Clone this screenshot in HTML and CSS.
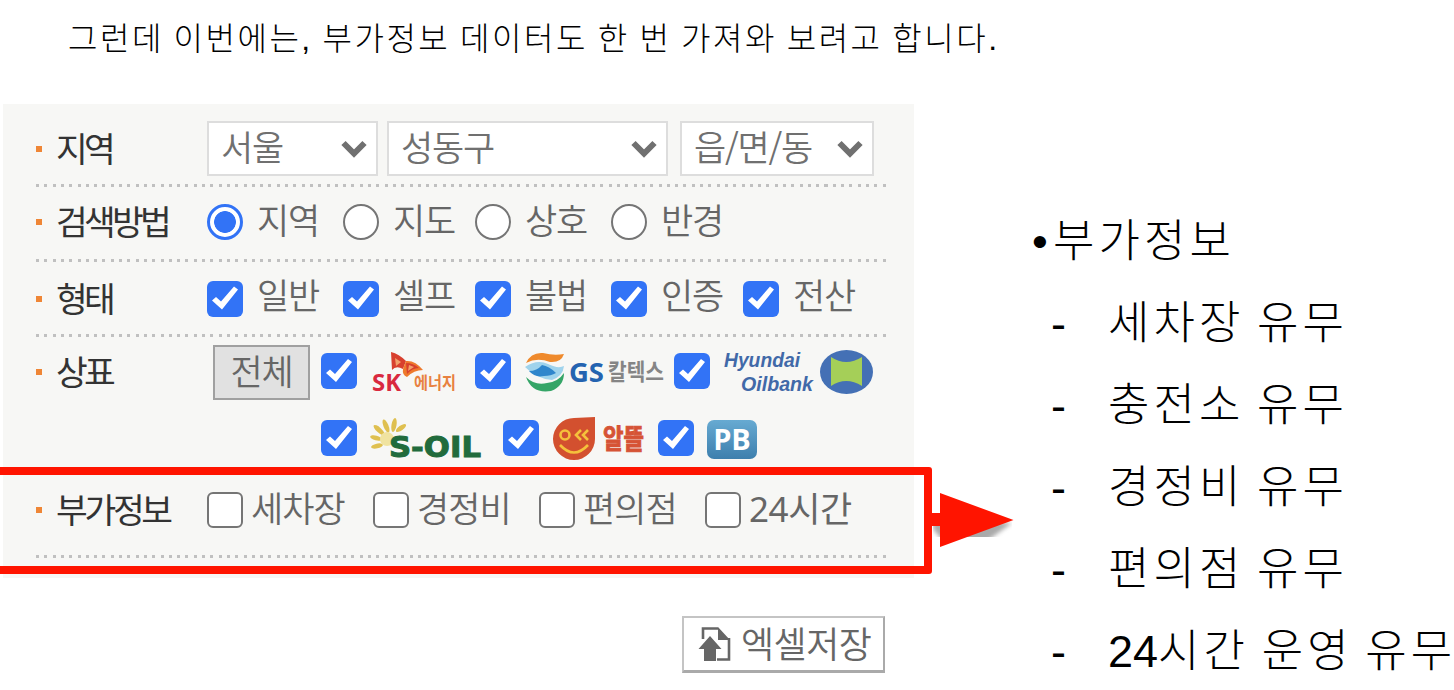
FILE: index.html
```html
<!DOCTYPE html>
<html lang="ko">
<head>
  <meta charset="UTF-8">
  <meta name="viewport" content="width=device-width, initial-scale=1.0">
  <title>부가정보</title>
  <link rel="stylesheet" href="styles.css">
</head>
<body>
  <p class="intro">그런데 이번에는, 부가정보 데이터도 한 번 가져와 보려고 합니다.</p>

  <div class="content">
    <div class="left">
      <form class="panel">
        <div class="row row-area">
          <span class="title">지역</span>
          <div class="selects">
            <div class="select city">
              <select><option>서울</option></select>
              <svg class="arrow" viewBox="0 0 26 18"><path d="M2.5 3 L13 13.5 L23.5 3"/></svg>
            </div>
            <div class="select gu">
              <select><option>성동구</option></select>
              <svg class="arrow" viewBox="0 0 26 18"><path d="M2.5 3 L13 13.5 L23.5 3"/></svg>
            </div>
            <div class="select dong">
              <select><option>읍/면/동</option></select>
              <svg class="arrow" viewBox="0 0 26 18"><path d="M2.5 3 L13 13.5 L23.5 3"/></svg>
            </div>
          </div>
        </div>

        <div class="row row-way">
          <span class="title">검색방법</span>
          <div class="options">
            <label><input type="radio" name="way" checked><span>지역</span></label>
            <label><input type="radio" name="way"><span>지도</span></label>
            <label><input type="radio" name="way"><span>상호</span></label>
            <label><input type="radio" name="way"><span>반경</span></label>
          </div>
        </div>

        <div class="row row-type">
          <span class="title">형태</span>
          <div class="options">
            <label><input type="checkbox" checked><span>일반</span></label>
            <label><input type="checkbox" checked><span>셀프</span></label>
            <label><input type="checkbox" checked><span>불법</span></label>
            <label><input type="checkbox" checked><span>인증</span></label>
            <label><input type="checkbox" checked><span>전산</span></label>
          </div>
        </div>

        <div class="row row-brand">
          <span class="title">상표</span>
          <button type="button" class="all">전체</button>
          <div class="brands">
            <div class="brand-line first">
              <label>
                <input type="checkbox" checked>
                <svg class="sk" width="86" height="44" viewBox="0 0 86 44">
                  <path fill="#d8402e" d="M19 3 Q27 5 34 12 L31 20 Q24 16 20 21 Z"/>
                  <path fill="#ee7a2d" d="M34 12 Q43 11 51 21 Q42 21 35 28 Q30 26 31 20 Z"/>
                  <path fill="#d8402e" d="M34 14 Q41 14 47 19 Q40 19 35 25 Z"/>
                  <path fill="#f2a06a" d="M23 9 L29 13 L24 17 Z M37 16 L42 18 L36 22 Z"/>
                  <text x="0" y="42" class="sk-en" textLength="29" lengthAdjust="spacingAndGlyphs">SK</text>
                  <text x="42" y="40" class="sk-ko" textLength="42" lengthAdjust="spacingAndGlyphs">에너지</text>
                </svg>
              </label>
              <label>
                <input type="checkbox" checked>
                <svg class="gs" width="140" height="44" viewBox="0 0 140 44">
                  <path fill="#ef8a2c" d="M1 14 Q6 3 18 4 Q29 7 39 5 Q36 14 25 13 Q12 8 1 14 Z"/>
                  <path fill="#9fd3ec" d="M0 18 Q12 10 23 15 Q33 20 39 17 Q38 27 27 31 Q12 30 0 18 Z"/>
                  <path fill="#2f86cc" d="M4 22 Q12 22 17 16 Q24 17 31 24 Q26 27 19 27 Q10 29 4 22 Z"/>
                  <path fill="#35a567" d="M1 28 Q10 37 22 34 Q33 33 39 24 Q39 37 26 42 Q7 45 1 28 Z"/>
                  <text x="44" y="33" class="gs-en" textLength="35" lengthAdjust="spacingAndGlyphs">GS</text>
                  <text x="83" y="31" class="gs-ko" textLength="56" lengthAdjust="spacingAndGlyphs">칼텍스</text>
                </svg>
              </label>
              <label>
                <input type="checkbox" checked>
                <svg class="hyundai" width="150" height="46" viewBox="0 0 150 46">
                  <text x="1" y="19" class="hd-text" textLength="76" lengthAdjust="spacingAndGlyphs">Hyundai</text>
                  <text x="18" y="43" class="hd-text" textLength="72" lengthAdjust="spacingAndGlyphs">Oilbank</text>
                  <ellipse cx="123.5" cy="24" rx="26.5" ry="22" fill="#4470b5"/>
                  <path fill="#a5cf58" d="M108 9 Q123 19 139 9 L139 38 Q123 28 108 38 Z"/>
                </svg>
              </label>
            </div>
            <div class="brand-line second">
              <label>
                <input type="checkbox" checked>
                <svg class="soil" width="112" height="44" viewBox="0 0 112 44">
                  <g fill="#dfc050">
                    <ellipse cx="7" cy="28" rx="6" ry="2.4" transform="rotate(-12 7 28)"/>
                    <ellipse cx="6" cy="20" rx="6" ry="2.4" transform="rotate(15 6 20)"/>
                    <ellipse cx="9" cy="12" rx="7" ry="2.5" transform="rotate(42 9 12)"/>
                    <ellipse cx="16" cy="8" rx="7" ry="2.5" transform="rotate(68 16 8)"/>
                    <ellipse cx="24" cy="7" rx="7" ry="2.5" transform="rotate(100 24 7)"/>
                    <ellipse cx="31" cy="10" rx="6" ry="2.4" transform="rotate(-35 31 10)"/>
                  </g>
                  <circle cx="17" cy="21" r="7" fill="#f0e3a0"/>
                  <text x="19" y="39" class="soil-text" textLength="92" lengthAdjust="spacingAndGlyphs">S-OIL</text>
                </svg>
              </label>
              <label>
                <input type="checkbox" checked>
                <svg class="alddle" width="94" height="44" viewBox="0 0 94 44">
                  <path fill="#d3502f" d="M21 1 L42 0 L42 22 A21 21 0 1 1 21 1 Z"/>
                  <g fill="none" stroke="#f5c13c" stroke-width="2.6">
                    <circle cx="12" cy="18" r="4.5"/>
                    <path d="M28 13 L23 18 L28 23 M35 13 L30 18 L35 23"/>
                    <path d="M7 28 Q21 43 35 28"/>
                  </g>
                  <text x="50" y="32" class="al-text" textLength="41" lengthAdjust="spacingAndGlyphs">알뜰</text>
                </svg>
              </label>
              <label>
                <input type="checkbox" checked>
                <span class="pb">PB</span>
              </label>
            </div>
          </div>
        </div>

        <div class="row row-extra">
          <span class="title">부가정보</span>
          <div class="options">
            <label><input type="checkbox"><span>세차장</span></label>
            <label><input type="checkbox"><span>경정비</span></label>
            <label><input type="checkbox"><span>편의점</span></label>
            <label><input type="checkbox"><span class="hours">24시간</span></label>
          </div>
        </div>
      </form>

      <div class="mark"></div>
      <svg class="pointer" width="92" height="70" viewBox="0 0 92 70">
        <path class="shade" d="M4 24 L83 30 L58 48 L14 48 L4 36 Z"/>
        <path fill="#ff1400" d="M0 20 H11 V0 L84.5 27 L11 54 V33 H0 Z"/>
      </svg>

      <button type="button" class="excel">
        <svg width="32" height="36" viewBox="0 0 32 36">
          <path fill="none" stroke="#666" stroke-width="2.6" d="M4 13 V2.5 H19 M30 12 V33.5 H18"/>
          <path fill="#666" d="M19 1 L31 14 H19 Z M11 10 L22.5 23 H17 V35 H5 V23 H-.5 Z"/>
        </svg>
        <span>엑셀저장</span>
      </button>
    </div>

    <div class="notes">
      <h2><i>•</i>부가정보</h2>
      <ul>
        <li>세차장 유무</li>
        <li>충전소 유무</li>
        <li>경정비 유무</li>
        <li>편의점 유무</li>
        <li><b>24</b>시간 운영 유무</li>
      </ul>
    </div>
  </div>
</body>
</html>
```
FILE: styles.css
```css
*{
  box-sizing: border-box;
}

body{
  margin:0;
  width:1454px;
  height:690px;
  overflow:hidden;
  background-color: #fff;
  color:#000;
  font-family: "Noto Sans CJK KR", sans-serif;
}

.intro{
  height:104px;
  margin:0;
  padding:19px 0 0 68px;
  font-family: "Liberation Sans", "Noto Sans CJK KR", sans-serif;
  font-size:32px;
  font-weight:300;
  line-height:40px;
  letter-spacing:2.5px;
  word-spacing:-1.6px;
  white-space: nowrap;
}

.content{
  display:flex;
}

.left{
  position:relative;
  flex:none;
  width:1020px;
}

.panel{
  width:911px;
  height:474px;
  margin-left:3px;
  padding:0 28px 0 33px;
  background-color: #f7f7f5;
}

.row{
  display:flex;
  align-items: center;
  height:75px;
  padding-bottom:4px;
  background: repeating-linear-gradient(to right, #c0c0c0 0 3px, transparent 3px 8.3px) left bottom / 100% 3px no-repeat;
}

.row-area{
  height:83px;
  padding:6px 0 0;
}

.row-way{
  padding-bottom:6px;
}

.row-type{
  padding-bottom:2px;
}

.row-brand{
  height:133px;
  align-items: flex-start;
  padding:8px 0 0;
  background:none;
}

.row-extra{
  height:88px;
  padding:0 0 9px;
}

.title{
  display:flex;
  align-items: center;
  flex:none;
  width:171px;
  height:54px;
  padding-bottom:4px;
  color:#333;
  font-size:34.5px;
  font-weight:400;
  letter-spacing:-3.7px;
  line-height:50px;
}

.title::before{
  content:"";
  width:6px;
  height:6px;
  margin:4px 14px 0 0;
  background-color: #ef8636;
}

.row-brand .title{
  width:177px;
}

.row-extra .title{
  letter-spacing:-3.3px;
}

.selects{
  display:flex;
}

.select{
  position:relative;
  height:55px;
}

.city{ width:171px; margin-right:9px; }
.gu{ width:281px; margin-right:12px; }
.dong{ width:194px; }

select{
  appearance:none;
  width:100%;
  height:100%;
  padding:0 10px 5px 12px;
  border:2px solid #ddd;
  border-radius:0;
  background-color: #fff;
  color:#707070;
  font-family:inherit;
  font-size:35px;
  font-weight:350;
  line-height:44px;
  letter-spacing:-1.2px;
}

.arrow{
  position:absolute;
  right:11px;
  top:19px;
  width:26px;
  height:18px;
  fill:none;
  stroke:#707070;
  stroke-width:6;
}

.options{
  display:grid;
  grid-template-columns: 136px 132px 136px 132px 136px;
}

label{
  display:flex;
  align-items: center;
}

label span{
  color:#666;
  font-size:35px;
  font-weight:350;
  line-height:44px;
  letter-spacing:-1.3px;
  white-space: nowrap;
}

.options label span{
  margin:-6px 0 0 14px;
}

.row-type .options label span{
  margin-top:-10px;
}

.row-extra .options{
  grid-template-columns: repeat(4, 166px);
}

.row-extra .options label span{
  margin:-2px 0 0 8px;
  font-family: "Noto Sans", "Noto Sans CJK KR", sans-serif;
  letter-spacing:-1px;
}

.row-extra .options .hours{
  font-weight:400;
  letter-spacing:-0.4px;
}

input{
  appearance:none;
  flex:none;
  width:36px;
  height:36px;
  margin:0;
  border:2px solid #757575;
  background-color: #fff;
}

input[type="radio"]{
  border-radius:50%;
}

input[type="radio"]:checked{
  border:3px solid #3273f6;
  background-image: radial-gradient(circle, #3273f6 10.5px, #fff 11.2px);
}

input[type="checkbox"]{
  border-radius:6px;
}

input[type="checkbox"]:checked{
  border:none;
  background-color: #3273f6;
}

input[type="checkbox"]:checked::before{
  content:"";
  display:block;
  width:36px;
  height:36px;
  background-color: #fff;
  clip-path: polygon(5px 20px, 9px 16.5px, 14px 21px, 27px 6px, 31px 9px, 15px 29px);
}

.all{
  width:97px;
  height:55px;
  padding:0 0 5px;
  border:2px solid #a0a0a0;
  background-color: #e1e1e1;
  color:#666;
  font-family:inherit;
  font-size:35px;
  font-weight:350;
  line-height:44px;
  letter-spacing:-1.3px;
}

.brands{
  margin-left:11px;
}

.brand-line{
  display:flex;
  height:67px;
}

.brand-line svg{
  flex:none;
  overflow:visible;
}

.sk{ margin:0 17px 0 15px; }
.gs{ margin:0 9px 0 14px; }
.hyundai{ margin-left:13px; }
.soil{ margin:4px 21px 0 13px; }
.alddle{ margin:2px 11px 0 14px; }

.first label,
.second label{
  height:52px;
}

.sk-en{
  fill:#d9293f;
  font:bold 23px "Open Sans", sans-serif;
}

.sk-ko{
  fill:#e8813f;
  font:bold 17px "Noto Sans CJK KR", sans-serif;
}

.gs-en{
  fill:#2463b0;
  font:bold 26px "Open Sans", sans-serif;
}

.gs-ko{
  fill:#858585;
  font:bold 23px "Noto Sans CJK KR", sans-serif;
}

.hd-text{
  fill:#4169a8;
  font:italic bold 20px "Liberation Sans", sans-serif;
}

.soil-text{
  fill:#216b3c;
  stroke:#216b3c;
  font:bold 29px "DejaVu Sans", sans-serif;
}

.al-text{
  fill:#d65335;
  stroke:#d65335;
  font:bold 27px "Noto Sans CJK KR", sans-serif;
}

label .pb{
  width:50px;
  height:39px;
  margin:2px 0 0 13px;
  border-radius:7px;
  background: linear-gradient(#67aad2, #3d7fad);
  color:#fff;
  font:bold 29px/37px "Open Sans", sans-serif;
  letter-spacing:0;
  text-align: center;
}

/* red frame around the extra options */
.mark{
  position:absolute;
  left:-10px;
  top:363px;
  width:942px;
  height:107px;
  border:8px solid #ff1400;
  border-radius:3px;
}

.pointer{
  position:absolute;
  left:929px;
  top:389px;
}

.shade{
  fill:#aaa;
  filter:blur(2px);
  clip-path: inset(0 0 4px 0);
}

.excel{
  display:flex;
  align-items: center;
  width:203px;
  height:57px;
  margin:38px 0 0 682px;
  padding:0 0 0 15px;
  border:2px solid #c4c4c4;
  border-right-color:#aaa;
  border-bottom:3px solid #aaa;
  background-color: #fff;
  color:#666;
  font-family:inherit;
  font-size:36px;
  font-weight:350;
  letter-spacing:-0.5px;
  white-space: nowrap;
}

.excel svg{
  flex:none;
  margin-right:10px;
  overflow:visible;
}

.excel span{
  margin-top:-5px;
}

.notes{
  padding-top:97px;
  font-family: "Liberation Sans", "Noto Sans CJK KR", sans-serif;
  font-size:45px;
  font-weight:300;
  letter-spacing:4.1px;
  word-spacing:-4px;
  white-space: nowrap;
}

.notes h2{
  display:flex;
  height:82px;
  margin:0;
  font-size:inherit;
  font-weight:300;
  line-height:82px;
}

.notes i{
  width:33px;
  padding-left:12px;
  font-style:normal;
  letter-spacing:0;
}

.notes ul{
  margin:0;
  padding:0;
  list-style:none;
}

.notes li{
  display:flex;
  height:82px;
  line-height:82px;
  white-space: pre;
}

.notes li::before{
  content:"-";
  width:57px;
  margin-left:31px;
}

.notes b{
  font-weight:400;
  letter-spacing:0;
}
```
